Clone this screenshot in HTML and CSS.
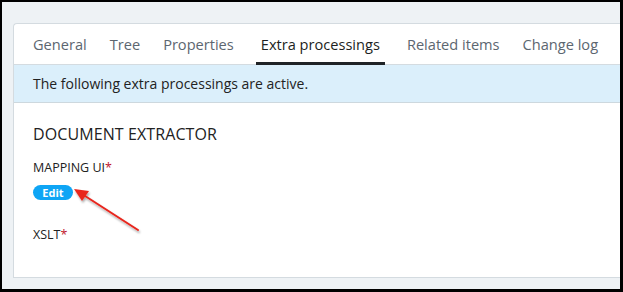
FILE: index.html
```html
<!DOCTYPE html>
<html lang="en">
<head>
    <meta charset="UTF-8">
    <meta name="viewport" content="width=device-width, initial-scale=1.0">
    <title>Extra processings</title>
    <link rel="stylesheet" href="styles.css">
</head>
<body>
    <div class="screen">
        <div class="card">
            <div class="tabs">
                <a class="tab">General</a>
                <a class="tab">Tree</a>
                <a class="tab">Properties</a>
                <a class="tab active">Extra processings</a>
                <a class="tab">Related items</a>
                <a class="tab">Change log</a>
            </div>
            <div class="notice">The following extra processings are active.</div>
            <div class="content">
                <h2>Document extractor</h2>
                <div class="field">
                    <label>Mapping UI<span class="req">*</span></label>
                    <button class="edit">Edit</button>
                </div>
                <div class="field">
                    <label>XSLT<span class="req">*</span></label>
                </div>
                <!-- annotation arrow -->
                <svg class="arrow" width="80" height="50" viewBox="0 0 80 50">
                    <defs>
                        <filter id="shadow" x="-20%" y="-20%" width="140%" height="140%">
                            <feDropShadow dx="1" dy="2" stdDeviation="1.2" flood-color="#000" flood-opacity="0.35"/>
                        </filter>
                    </defs>
                    <g filter="url(#shadow)">
                        <line x1="66" y1="43" x2="10" y2="7" stroke="#e8261f" stroke-width="2" stroke-linecap="round"/>
                        <polygon points="2,2 17,4 10,14" fill="#e8261f"/>
                    </g>
                </svg>
            </div>
        </div>
    </div>
</body>
</html>
```

FILE: styles.css
```css
html, body{
    margin: 0;
    padding: 0;
    background: #000;
}
.screen{
    box-sizing: border-box;
    width: 623px;
    height: 292px;
    border: solid #000;
    border-width: 2px 3px 3px 2px;
    background: #eef2f5;
    padding: 21px 0 12px 11px;
    overflow: hidden;
    font-family: "Open Sans", "Liberation Sans", sans-serif;
    color: #222;
}
.card{
    background: #fff;
    border: 1px solid #d4dbe0;
    border-right: none;
    border-radius: 4px 0 0 0;
    height: 253px;
    display: flex;
    flex-direction: column;
}
.tabs{
    display: flex;
    gap: 23px;
    padding: 0 0 0 19px;
    border-bottom: 1px solid #d4dbe0;
    height: 40px;
}
.tab{
    display: flex;
    align-items: center;
    font-size: 14.6px;
    color: #5c6670;
    position: relative;
}
.tab.active{
    color: #1d1f22;
    padding: 0 5px;
    margin: 0 -1px;
}
.tab.active::after{
    content: "";
    position: absolute;
    left: 0;
    right: 0;
    bottom: -1px;
    height: 3px;
    background: #1f2326;
}
.notice{
    background: #dbeffb;
    border-bottom: 1px solid #cdd8de;
    height: 37px;
    padding-left: 19px;
    display: flex;
    align-items: center;
    font-size: 14px;
    color: #222;
}
.content{
    position: relative;
    padding: 19px 19px 0;
}
h2{
    margin: 0;
    font-size: 16px;
    font-weight: 500;
    text-transform: uppercase;
    line-height: 24px;
    letter-spacing: 0.1px;
}
.field{
    margin-top: 13px;
    display: flex;
    flex-direction: column;
    align-items: flex-start;
    gap: 8px;
}
.field + .field{
    margin-top: 26px;
}
label{
    font-size: 12.5px;
    text-transform: uppercase;
    line-height: 18px;
}
.req{
    color: #c0182c;
}
.edit{
    font-family: inherit;
    font-size: 11px;
    font-weight: 700;
    color: #fff;
    background: #0ea5f5;
    border: none;
    border-radius: 8px;
    width: 40px;
    height: 15px;
    padding: 0;
    line-height: 15px;
}
.arrow{
    position: absolute;
    left: 58px;
    top: 84px;
}
```
